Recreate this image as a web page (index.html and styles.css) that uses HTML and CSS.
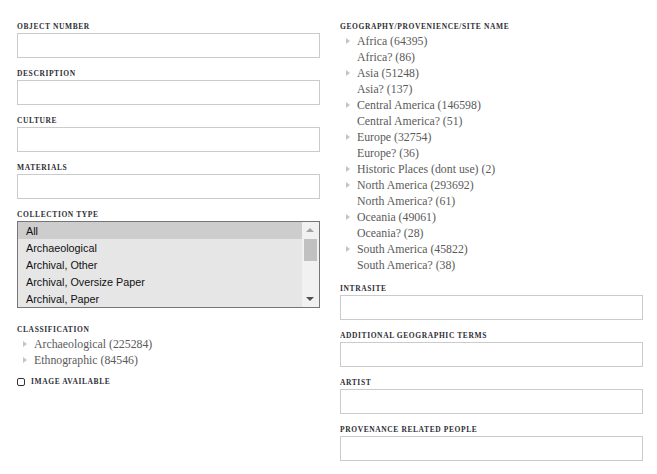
FILE: index.html
```html
<!DOCTYPE html>
<html>
<head>
<meta charset="utf-8">
<link rel="stylesheet" href="styles.css">
</head>
<body>
<div class="page">
  <div class="col">
    <div class="field"><div class="label">Object Number</div><div class="input"></div></div>
    <div class="field"><div class="label">Description</div><div class="input"></div></div>
    <div class="field"><div class="label">Culture</div><div class="input"></div></div>
    <div class="field"><div class="label">Materials</div><div class="input"></div></div>
    <div class="field select-field">
      <div class="label">Collection Type</div>
      <div class="listbox">
        <div class="options">
          <div class="opt selected">All</div>
          <div class="opt">Archaeological</div>
          <div class="opt">Archival, Other</div>
          <div class="opt">Archival, Oversize Paper</div>
          <div class="opt">Archival, Paper</div>
        </div>
        <div class="scrollbar">
          <div class="arrow up"></div>
          <div class="track"><div class="thumb"></div></div>
          <div class="arrow down"></div>
        </div>
      </div>
    </div>
    <div class="field tree-field short">
      <div class="label">Classification</div>
      <ul class="tree">
        <li class="node"><span class="tri"></span>Archaeological (225284)</li>
        <li class="node"><span class="tri"></span>Ethnographic (84546)</li>
      </ul>
    </div>
    <div class="check-row"><span class="checkbox"></span><span class="label">Image Available</span></div>
  </div>
  <div class="col">
    <div class="field tree-field">
      <div class="label">Geography/Provenience/Site Name</div>
      <ul class="tree">
        <li class="node"><span class="tri"></span>Africa (64395)</li>
        <li class="node"><span class="notri"></span>Africa? (86)</li>
        <li class="node"><span class="tri"></span>Asia (51248)</li>
        <li class="node"><span class="notri"></span>Asia? (137)</li>
        <li class="node"><span class="tri"></span>Central America (146598)</li>
        <li class="node"><span class="notri"></span>Central America? (51)</li>
        <li class="node"><span class="tri"></span>Europe (32754)</li>
        <li class="node"><span class="notri"></span>Europe? (36)</li>
        <li class="node"><span class="tri"></span>Historic Places (dont use) (2)</li>
        <li class="node"><span class="tri"></span>North America (293692)</li>
        <li class="node"><span class="notri"></span>North America? (61)</li>
        <li class="node"><span class="tri"></span>Oceania (49061)</li>
        <li class="node"><span class="notri"></span>Oceania? (28)</li>
        <li class="node"><span class="tri"></span>South America (45822)</li>
        <li class="node"><span class="notri"></span>South America? (38)</li>
      </ul>
    </div>
    <div class="field"><div class="label">Intrasite</div><div class="input"></div></div>
    <div class="field"><div class="label">Additional Geographic Terms</div><div class="input"></div></div>
    <div class="field"><div class="label">Artist</div><div class="input"></div></div>
    <div class="field"><div class="label">Provenance Related People</div><div class="input"></div></div>
  </div>
</div>
</body>
</html>
```
FILE: styles.css
```css
* { box-sizing: border-box; }
html, body { margin: 0; padding: 0; background: #fff; }
body { font-family: "Liberation Serif", serif; color: #333; }

.page {
  display: grid;
  grid-template-columns: 303px 303px;
  column-gap: 20px;
  padding: 22px 0 0 17px;
}

.col { display: flex; flex-direction: column; }

.field { margin-bottom: 11px; }
.field.select-field { margin-bottom: 17px; }
.field.tree-field.short { margin-bottom: 8px; }

.label {
  font-family: "Liberation Serif", serif;
  font-weight: bold;
  font-size: 7.5px;
  line-height: 10px;
  height: 11px;
  letter-spacing: 0.6px;
  text-transform: uppercase;
  color: #2e2e35;
}

.input {
  height: 25px;
  border: 1px solid #cbcbcb;
  background: #fff;
}

.listbox {
  height: 87px;
  border: 1px solid #767676;
  background: #e6e6e6;
  display: flex;
}
.options { flex: 1; }
.opt {
  height: 17px;
  line-height: 18px;
  padding-left: 8px;
  font-family: "Liberation Sans", Arial, sans-serif;
  font-size: 10.8px;
  color: #111;
}
.opt.selected { background: #cdcdcd; }

.scrollbar {
  width: 17px;
  background: #f1f1f1;
  display: flex;
  flex-direction: column;
}
.arrow { height: 15px; position: relative; }
.arrow::after {
  content: "";
  position: absolute;
  left: 4px;
  top: 6px;
  border-left: 4px solid transparent;
  border-right: 4px solid transparent;
}
.arrow.up::after { border-bottom: 4px solid #a3a3a3; }
.arrow.down::after { border-top: 4px solid #505050; top: 5px; }
.track { flex: 1; padding: 2px 2px 0 2px; }
.thumb { height: 22px; background: #c1c1c1; }

.tree { list-style: none; margin: 0; padding: 0; }
.node {
  height: 16px;
  line-height: 16px;
  font-size: 11.8px;
  color: #5a5a5a;
  display: flex;
  align-items: center;
  padding-left: 6px;
}
.tri, .notri { width: 11px; flex: none; height: 6px; position: relative; }
.tri::before {
  content: "";
  position: absolute;
  left: 0;
  top: 0;
  border-top: 3px solid transparent;
  border-bottom: 3px solid transparent;
  border-left: 4px solid #c4c4c4;
}

.check-row {
  display: flex;
  align-items: center;
  height: 11px;
}
.checkbox {
  width: 8px;
  height: 8px;
  border: 1px solid #333;
  border-radius: 2px;
  margin-right: 6px;
  flex: none;
}
.check-row .label { height: auto; line-height: 11px; }
```
